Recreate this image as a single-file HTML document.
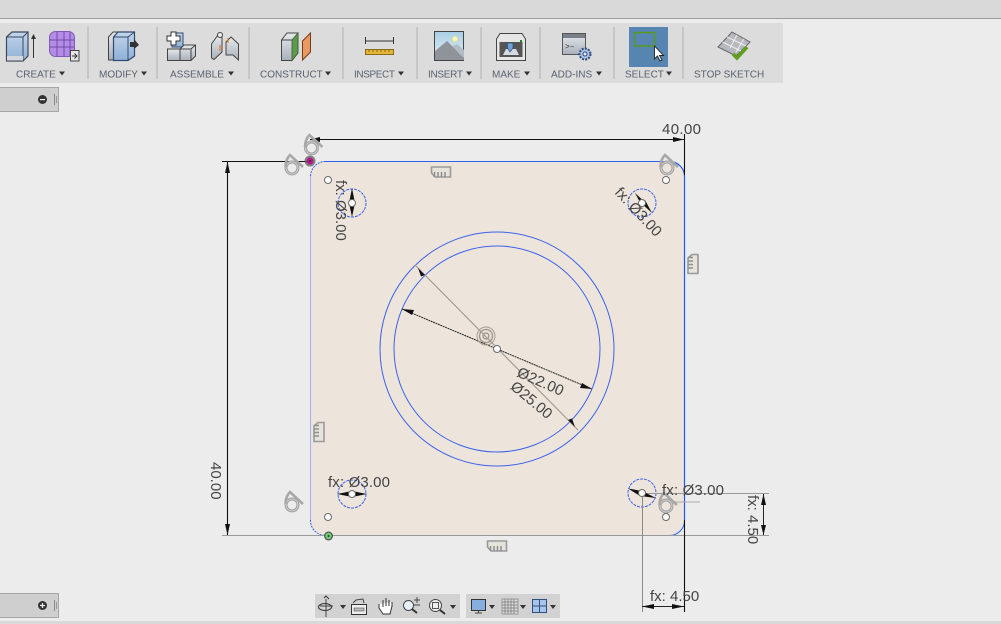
<!DOCTYPE html>
<html>
<head>
<meta charset="utf-8">
<style>
html,body{margin:0;padding:0;width:1001px;height:624px;overflow:hidden;background:#ececec}
svg{display:block;position:absolute;left:0;top:0}
text{font-family:"Liberation Sans",sans-serif}
.l{font-size:10px;fill:#59616e}
.d{font-size:15px;fill:#444}
</style>
</head>
<body>
<svg width="1001" height="624" viewBox="0 0 1001 624" xmlns="http://www.w3.org/2000/svg">
<defs>
<linearGradient id="bl" x1="0" y1="0" x2="0" y2="1"><stop offset="0" stop-color="#c3d5ea"/><stop offset="1" stop-color="#8fb0d6"/></linearGradient>
<linearGradient id="gr" x1="0" y1="0" x2="0" y2="1"><stop offset="0" stop-color="#e6e9ed"/><stop offset="1" stop-color="#aab0bb"/></linearGradient>
<linearGradient id="sky" x1="0" y1="0" x2="0" y2="1"><stop offset="0" stop-color="#a9cfe6"/><stop offset="1" stop-color="#e6eff4"/></linearGradient>
<g id="coin" fill="none"><circle cx="0" cy="0" r="6" stroke-width="3" stroke="#a3a3a3"/><circle cx="0" cy="0" r="6" stroke-width=".8" stroke="#d5d5d5"/><path d="M-6.500 -1C-6.500 -7 -4 -11 -2 -13L11 -1" stroke-width="2.600" stroke="#a8a8a8"/></g>
<g id="comb"><path d="M-9.500 -5H9.500V5H-6L-9.500 1Z" fill="#e6e2dc" stroke="#9a9a9a" stroke-width="1.600"/><path d="M-6.500 5V0M-3 5V0M.5 5V0M4 5V0" stroke="#8f8f8f" stroke-width="1.500"/></g>
</defs>

<!-- chrome -->
<rect x="0" y="0" width="1001" height="18" fill="#d9d9d9"/>
<rect x="0" y="18" width="1001" height="1" fill="#9c9c9c"/>
<rect x="0" y="23" width="783" height="60" fill="#dcdcdc"/>
<rect x="0" y="621" width="1001" height="3" fill="#d9d9d9"/>

<!-- separators -->
<g fill="#c6c6c6">
<rect x="87" y="27" width="2" height="52"/><rect x="156" y="27" width="2" height="52"/><rect x="248" y="27" width="2" height="52"/><rect x="342" y="27" width="2" height="52"/><rect x="416" y="27" width="2" height="52"/><rect x="480" y="27" width="2" height="52"/><rect x="539" y="27" width="2" height="52"/><rect x="613" y="27" width="2" height="52"/><rect x="682" y="27" width="2" height="52"/>
</g>

<!-- CREATE box -->
<path d="M6.500 37L12 32H28V56L23 61H6.500Z" fill="url(#bl)" stroke="#3d4a5c" stroke-width="1.200"/>
<path d="M6.500 37H23V61M23 37L28 32" fill="none" stroke="#3d4a5c"/>
<rect x="7" y="56" width="16" height="4.500" fill="#d4d8de"/>
<path d="M33.500 58V38" stroke="#333" stroke-width="1"/><path d="M31 39L33.500 34L36 39Z" fill="#333"/>
<!-- form -->
<rect x="49.500" y="31.500" width="25" height="25" rx="6" fill="#b48be6" stroke="#7f5ab5"/>
<path d="M50 40H74M50 47H74M57 32V56M64 32V56M70 32V56" stroke="#6f4ca5" stroke-width="1" fill="none"/>
<rect x="70.500" y="50.500" width="8.500" height="10.500" fill="#e6e6e6" stroke="#444"/>
<path d="M72 56H76M74.500 53.500L77 56L74.500 58.500" stroke="#333" fill="none"/>

<!-- MODIFY -->
<path d="M108.500 37L113 32H120V60H108.500Z" fill="url(#gr)" stroke="#444"/>
<path d="M113.500 37L118 32H134.500V56L128 60.500H113.500Z" fill="url(#bl)" stroke="#2f4a70" stroke-width="1.200"/>
<path d="M113.500 37H128V60.500M128 37L134.500 32" fill="none" stroke="#2f4a70"/>
<path d="M130 42H134V39L139 45L134 49V47H130Z" fill="#333"/>

<!-- ASSEMBLE -->
<path d="M172 33H183V47H172Z" fill="url(#bl)" stroke="#2f4a70"/>
<path d="M167.500 49H180V60.500H167.500Z" fill="url(#gr)" stroke="#444"/>
<path d="M180 49L184 45H195.500V56L191 60.500H180Z" fill="url(#gr)" stroke="#444"/>
<path d="M180 49H191V60.500M191 49L195.500 45" fill="none" stroke="#444"/>
<path d="M171 32H176V36H180V41H176V45H171V41H167V36H171Z" fill="#fff" stroke="#333"/>
<!-- joint -->
<path d="M211.500 44L218 35H222V52L214 59.500L211.500 58Z" fill="url(#gr)" stroke="#444"/>
<circle cx="220" cy="35" r="2.500" fill="#eee" stroke="#444"/>
<path d="M226 47V42L231 37L238.500 44V60L233 55H226Z" fill="url(#gr)" stroke="#444"/>
<path d="M220 51V45M228 43V38" stroke="#ee7a14" stroke-width="1.200"/>

<!-- CONSTRUCT -->
<path d="M281.500 40L287 33H298V53L292 60.500H281.500Z" fill="url(#gr)" stroke="#444"/>
<path d="M292 40L298 33V53L292 60.500Z" fill="#5c9a4c" stroke="#3f5c36" stroke-width=".8"/>
<path d="M281.500 40H292" stroke="#444"/>
<path d="M302.500 41L310.500 33V52L302.500 60Z" fill="#e79a62" stroke="#7b3b12"/>

<!-- INSPECT -->
<path d="M365.500 37V44M393.500 37V44M366 41H393" stroke="#333" fill="none"/>
<rect x="365.500" y="49.500" width="28" height="5" fill="#e4b53a" stroke="#8a6a14"/>
<path d="M369 50V52M373 50V52M377 50V52M381 50V52M385 50V52M389 50V52" stroke="#8a6a14"/>

<!-- INSERT -->
<rect x="434.500" y="31.500" width="29" height="29" fill="url(#sky)" stroke="#444"/>
<circle cx="455" cy="39" r="2.500" fill="#fdf6c4" stroke="#f2e18a"/>
<path d="M435 60V51L447 41L464 58V60Z" fill="#8f939a"/>
<path d="M452 46L457 44L464 50V58Z" fill="#b3bcc5"/>

<!-- MAKE -->
<path d="M496.500 39L500 33.500H522L525.500 39V60.500H496.500Z" fill="#e6e6e6" stroke="#444"/>
<rect x="499.500" y="42" width="23" height="15" fill="#555"/>
<path d="M503 55L506 49H516L519 55Z" fill="#d5dbe3"/>
<path d="M507.500 43H513V48L510 52L507.500 48Z" fill="#6fa3d8" stroke="#2f4a70" stroke-width=".7"/>
<rect x="520" y="40" width="2" height="2" fill="#0a8a1a"/>

<!-- ADD-INS -->
<rect x="562.500" y="33.500" width="23" height="21" fill="url(#gr)" stroke="#555"/>
<rect x="563" y="34" width="22" height="4" fill="#7a7f88"/>
<text x="565" y="49" style="font-size:8px;font-family:'Liberation Mono',monospace" fill="#333">&gt;–</text>
<circle cx="585" cy="54" r="5.500" fill="#a9c0e0" stroke="#2f4a80" stroke-width="2" stroke-dasharray="2 1.200"/>
<circle cx="585" cy="54" r="2" fill="#eef" stroke="#2f4a80"/>

<!-- SELECT -->
<rect x="629" y="27" width="39" height="40" fill="#5585b0"/>
<rect x="634.500" y="32.500" width="20" height="13.500" fill="none" stroke="#5b9a16" stroke-width="1.400"/>
<path d="M654.500 46V59L657.500 56L660 61L662 60L659.500 55.500H663.500Z" fill="#fff" stroke="#222" stroke-width=".9"/>

<!-- STOP SKETCH -->
<path d="M718 47L732 32L750 42L736 56Z" fill="#b5b8bc" stroke="#666"/>
<path d="M722.500 42L741 51M727 37L746 46M730 48L737 35M736 52L744 39" stroke="#eee" stroke-width="1"/>
<path d="M733 54L737 58L747 47" fill="none" stroke="#5fa01e" stroke-width="3.600"/>

<!-- toolbar labels -->
<g class="l">
<text class="l" x="16" y="77.500">CREATE</text>
<text class="l" x="99" y="77.500">MODIFY</text>
<text class="l" x="170" y="77.500">ASSEMBLE</text>
<text class="l" x="260" y="77.500">CONSTRUCT</text>
<text class="l" x="354" y="77.500" textLength="41">INSPECT</text>
<text class="l" x="428" y="77.500" textLength="35">INSERT</text>
<text class="l" x="492" y="77.500">MAKE</text>
<text class="l" x="551" y="77.500">ADD-INS</text>
<text class="l" x="625" y="77.500">SELECT</text>
<text class="l" x="694" y="77.500">STOP SKETCH</text>
</g>
<g fill="#333">
<path d="M59 71.500H65L62 75.500Z"/><path d="M141 71.500H147L144 75.500Z"/><path d="M228 71.500H234L231 75.500Z"/><path d="M325 71.500H331L328 75.500Z"/><path d="M398 71.500H404L401 75.500Z"/><path d="M466 71.500H472L469 75.500Z"/><path d="M524 71.500H530L527 75.500Z"/><path d="M596 71.500H602L599 75.500Z"/><path d="M666 71.500H672L669 75.500Z"/>
</g>

<!-- side panels -->
<rect x="-2" y="87.500" width="60.500" height="24" fill="#cfcfcf" stroke="#a6a6a6"/>
<circle cx="42.500" cy="99.500" r="4.500" fill="#333"/><rect x="40" y="99" width="5" height="1.200" fill="#eee"/>
<rect x="54" y="94" width="1" height="11" fill="#888"/><rect x="56" y="96" width="1" height="7" fill="#999"/>
<rect x="-2" y="593.500" width="60.500" height="24" fill="#cfcfcf" stroke="#a6a6a6"/>
<circle cx="42.500" cy="605.500" r="4.500" fill="#333"/><path d="M40 605.500H45M42.500 603V608" stroke="#eee" stroke-width="1.200"/>
<rect x="54" y="600" width="1" height="11" fill="#888"/><rect x="56" y="602" width="1" height="7" fill="#999"/>

<!-- bottom nav -->
<rect x="315" y="594" width="145" height="24" fill="#d2d2d2"/>
<rect x="466" y="594" width="94" height="24" fill="#d2d2d2"/>
<path d="M326 599V617M320 606H333" stroke="#444"/>
<ellipse cx="325" cy="607" rx="6.500" ry="3.500" fill="none" stroke="#333"/>
<path d="M324 598L326 596L329 599" fill="none" stroke="#333"/>
<path d="M340 605H346L343 609Z" fill="#333"/>
<rect x="351.500" y="604.500" width="15" height="10" fill="#eee" stroke="#333"/><rect x="354" y="608" width="10" height="3" fill="#bbb" stroke="#555" stroke-width=".6"/>
<path d="M353 603L356 600L363 599L364 603" fill="none" stroke="#444"/>
<path d="M379 604V608L383 614H390L392 606V602M383 607V600M386 606V598M389 606V600M392 607V602" fill="#fff" stroke="#333"/>
<circle cx="408.500" cy="605.500" r="5" fill="#e8f1f8" stroke="#444"/><path d="M412 609L417 613" stroke="#333" stroke-width="2"/><path d="M414 600H420M417 597V603M414 605H420" stroke="#444" stroke-width=".9"/>
<circle cx="435.500" cy="605.500" r="6" fill="#eee" stroke="#444"/><rect x="432.500" y="602.500" width="6" height="6" fill="#eee" stroke="#555"/><path d="M440 610L445 614" stroke="#333" stroke-width="2"/>
<path d="M450 605H456L453 609Z" fill="#333"/>
<rect x="471.500" y="599.500" width="14" height="11" fill="#86aede" stroke="#333"/><path d="M475 613H482M478.500 611V613" stroke="#444"/>
<path d="M489 605H495L492 609Z" fill="#333"/>
<rect x="502" y="599" width="16" height="15" fill="#d8d8d8" stroke="#777" stroke-width=".6"/>
<path d="M505 599V614M508 599V614M511 599V614M514 599V614M502 602H518M502 605H518M502 608H518M502 611H518" stroke="#777" stroke-width=".7"/>
<path d="M520 605H526L523 609Z" fill="#333"/>
<rect x="532.500" y="599.500" width="14" height="13" fill="#a8c4e8" stroke="#2f4f80"/>
<path d="M539.500 599V613M532 606H547" stroke="#2f4f80"/>
<path d="M550 605H556L553 609Z" fill="#333"/>

<!-- plate -->
<rect x="310" y="161" width="374" height="374" rx="15" fill="#ede5dc"/>
<path d="M325 161.500H669" stroke="#2d62f0" fill="none" stroke-width="1"/>
<path d="M669 161.500A15 15 0 0 1 684.500 177V520" stroke="#1f56f0" fill="none" stroke-width="1.200"/>
<path d="M684.500 520A15 15 0 0 1 669 535.500" stroke="#2d62f0" fill="none"/>
<path d="M310.500 176V520" stroke="#a4aeee" fill="none" stroke-width="1"/>
<path d="M310.500 176A15 15 0 0 1 325 161.500M310.500 520A15 15 0 0 0 325 535.500" stroke="#2d62f0" fill="none" stroke-dasharray="2 1"/>

<!-- circles -->
<g fill="none" stroke="#3c62ea" stroke-width="1">
<circle cx="497" cy="349" r="117"/>
<circle cx="497" cy="349" r="103"/>
<circle cx="352" cy="203" r="14" stroke-dasharray="3 1"/>
<circle cx="642" cy="203" r="14" stroke-dasharray="3 1"/>
<circle cx="352" cy="494" r="14" stroke-dasharray="3 1"/>
<circle cx="642" cy="493" r="14" stroke-dasharray="3 1"/>
</g>

<!-- dimension lines -->
<path d="M415 265L578 430" stroke="#a39c92" stroke-width="1.200"/>
<path d="M402 309L592 389" stroke="#222" stroke-width="1" stroke-dasharray="2 .6"/>
<path d="M418 268L425 275L421 276.500ZM575 427L568 420L572 418.500Z" fill="#111"/>
<path d="M402 309L414 310L412 315ZM592 389L580 388L582 383Z" fill="#111"/>

<path d="M310 139.500H684M684.500 134V175" stroke="#111" stroke-width="1.100" fill="none"/>
<path d="M310 139.500L320 137V142ZM684 139.500L673 137V142Z" fill="#111"/>
<path d="M222 161.500H310M227.500 161V535" stroke="#111" stroke-width="1.100" fill="none"/>
<path d="M227.500 162L225 173H230ZM227.500 535L225 524H230Z" fill="#111"/>
<path d="M222 535.500H684" stroke="#999" stroke-width="1.100" fill="none"/>
<path d="M642 493.500H769M684 535.500H769" stroke="#999" stroke-width="1"/>
<path d="M642.500 494V612" stroke="#8a8a8a" stroke-width="1"/>
<path d="M684.500 520V612" stroke="#111" stroke-width="1.100"/>
<path d="M763.500 494V535" stroke="#222"/>
<path d="M763.500 494L761 505H766ZM763.500 535L761 525H766Z" fill="#111"/>
<path d="M642 606.500H684" stroke="#222"/>
<path d="M642 606.500L654 604V609ZM684 606.500L672 604V609Z" fill="#111"/>
<path d="M668 502H700" stroke="#aaa" stroke-width="1"/>

<!-- hole arrows -->
<g fill="#111">
<path d="M352 188L349 203H355ZM352 217L349 203H355Z"/>
<path d="M635 193L647 204L642 206ZM652 213L640 202L645 200Z"/>
<path d="M337 494L352 491V497ZM367 494L352 491V497Z"/>
<path d="M628 488.500L642 491L640 496ZM656 498L642 491L640 496Z"/>
</g>

<!-- constraint icons -->
<use href="#coin" transform="translate(292 168)"/>
<use href="#coin" transform="translate(311.500 148)"/>
<use href="#coin" transform="translate(667 168)"/>
<use href="#coin" transform="translate(292 505)"/>
<use href="#coin" transform="translate(666 506)"/>
<use href="#comb" transform="translate(441 172)"/>
<use href="#comb" transform="translate(693 264) rotate(90)"/>
<use href="#comb" transform="translate(319 432) rotate(90)"/>
<use href="#comb" transform="translate(497 546)"/>

<!-- centre ring -->
<g fill="none" stroke="#a39c92"><circle cx="486" cy="336" r="9"/><circle cx="486" cy="336" r="6.500" stroke-width="1.500"/><circle cx="486" cy="336" r="3" stroke-width="1.500"/></g>

<!-- points -->
<g fill="#fff" stroke="#6a6a6a" stroke-width="1">
<circle cx="497" cy="349" r="3.500"/>
<circle cx="328" cy="180" r="3.500"/>
<circle cx="352" cy="203" r="3.500"/>
<circle cx="642" cy="203" r="3.500"/>
<circle cx="352" cy="494" r="3.500"/>
<circle cx="642" cy="493" r="3.500"/>
<circle cx="666" cy="180" r="3.500"/>
<circle cx="328" cy="517" r="3.500"/>
<circle cx="666" cy="517" r="3.500"/>
</g>
<circle cx="310" cy="161" r="5.500" fill="#555" opacity=".7"/><circle cx="310" cy="161" r="3.500" fill="#b5198a"/><circle cx="310" cy="161" r="1" fill="#333"/>
<circle cx="328.500" cy="536" r="4.500" fill="#555"/><circle cx="328.500" cy="536" r="3.200" fill="#6fd070"/><circle cx="328.500" cy="536" r="1" fill="#234"/>

<!-- dimension text -->
<text class="d" x="662" y="134" textLength="39">40.00</text>
<text class="d" transform="translate(211 462) rotate(90)">40.00</text>
<text class="d" transform="translate(336 180) rotate(90)">fx: Ø3.00</text>
<text class="d" transform="translate(614 193) rotate(47)">fx: Ø3.00</text>
<text class="d" x="328" y="487" textLength="62">fx: Ø3.00</text>
<text class="d" x="662" y="495" textLength="62">fx: Ø3.00</text>
<text class="d" transform="translate(748 495) rotate(90)">fx: 4.50</text>
<text class="d" x="650" y="601">fx: 4.50</text>
<text class="d" transform="translate(516 376) rotate(24)">Ø22.00</text>
<text class="d" transform="translate(509.500 388) rotate(40)">Ø25.00</text>
</svg>
</body>
</html>
